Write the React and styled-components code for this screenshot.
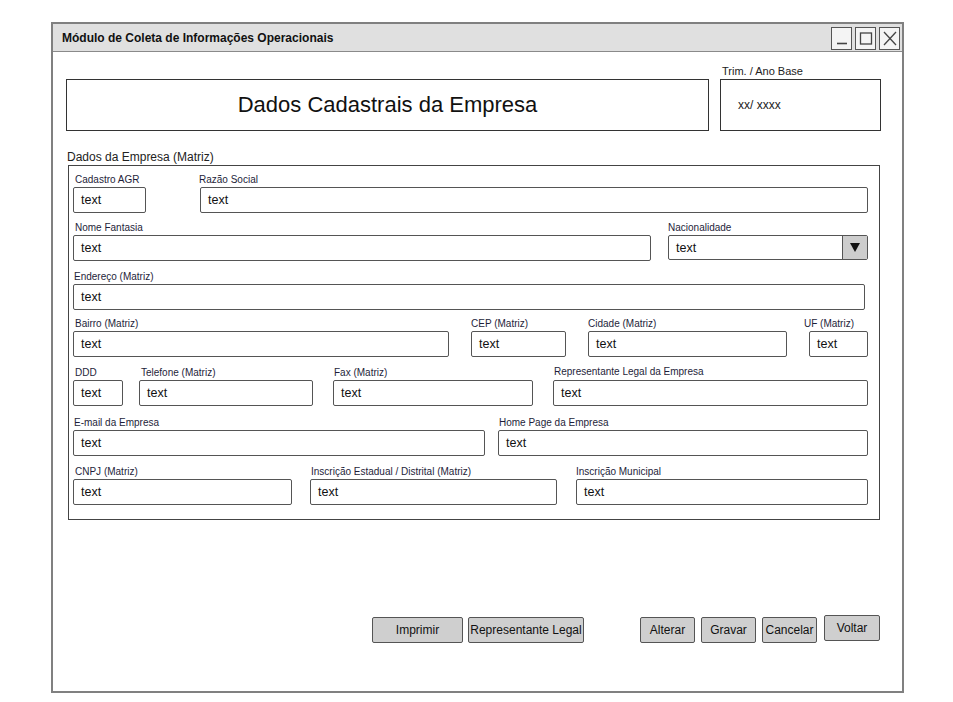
import React from "react";
import styled, { createGlobalStyle } from "styled-components";

const GlobalStyle = createGlobalStyle`
  html, body {
    margin: 0;
    padding: 0;
    background: #fff;
  }
  body {
    font-family: "Liberation Sans", Arial, sans-serif;
    color: #222;
  }
`;

const rows = [
  {
    mt: 7,
    fields: [
      { label: "Cadastro AGR", w: 73, ml: 4, lx: 2 },
      { label: "Razão Social", w: 668, ml: 54, lx: -1 },
    ],
  },
  {
    mt: 8,
    fields: [
      { label: "Nome Fantasia", w: 578, ml: 4, lx: 2 },
      { label: "Nacionalidade", w: 200, ml: 17, select: true },
    ],
  },
  {
    mt: 9,
    fields: [{ label: "Endereço (Matriz)", w: 792, ml: 4, lx: 1 }],
  },
  {
    mt: 7,
    fields: [
      { label: "Bairro (Matriz)", w: 376, ml: 4, lx: 2 },
      { label: "CEP (Matriz)", w: 95, ml: 22 },
      { label: "Cidade (Matriz)", w: 199, ml: 22 },
      { label: "UF (Matriz)", w: 59, ml: 22, lx: -5 },
    ],
  },
  {
    mt: 9,
    fields: [
      { label: "DDD", w: 50, ml: 4, lx: 2 },
      { label: "Telefone (Matriz)", w: 174, ml: 16, lx: 2 },
      { label: "Fax (Matriz)", w: 200, ml: 20, lx: 1 },
      { label: "Representante Legal da Empresa", w: 315, ml: 20, lx: 1, ly: -1 },
    ],
  },
  {
    mt: 10,
    fields: [
      { label: "E-mail da Empresa", w: 412, ml: 4, lx: 1 },
      { label: "Home Page da Empresa", w: 370, ml: 13, lx: 1 },
    ],
  },
  {
    mt: 9,
    fields: [
      { label: "CNPJ (Matriz)", w: 219, ml: 4, lx: 2 },
      { label: "Inscrição Estadual / Distrital (Matriz)", w: 247, ml: 18, lx: 1 },
      { label: "Inscrição Municipal", w: 292, ml: 19 },
    ],
  },
];

const leftButtons = [
  { label: "Imprimir", w: 91, ml: 319 },
  { label: "Representante Legal", w: 116, ml: 5 },
];

const rightButtons = [
  { label: "Alterar", w: 55, ml: 56 },
  { label: "Gravar", w: 55, ml: 6 },
  { label: "Cancelar", w: 55, ml: 6 },
  { label: "Voltar", w: 56, ml: 7, up: 2 },
];

const Window = styled.div`
  margin: 22px 0 0 51px;
  width: 853px;
  height: 671px;
  box-sizing: border-box;
  border: 2px solid #808080;
  display: flex;
  flex-direction: column;
`;

const TitleBar = styled.div`
  height: 27px;
  background: #e0e0e0;
  border-bottom: 1px solid #8a8a8a;
  display: flex;
  align-items: center;
  padding: 0 2px 0 9px;
`;

const Title = styled.div`
  flex: 1;
  font-size: 12px;
  font-weight: bold;
  color: #111;
  padding-top: 1px;
`;

const Controls = styled.div`
  display: flex;
  gap: 3px;
  padding-top: 2px;
`;

const ControlBox = styled.div`
  width: 21px;
  height: 23px;
  box-sizing: border-box;
  border: 1.5px solid #555;
  background: #f4f4f4;
  display: flex;
  align-items: center;
  justify-content: center;
`;

const Content = styled.div`
  padding: 12px 0 0 13px;
  display: flex;
  flex-direction: column;
`;

const HeaderRow = styled.div`
  display: flex;
  align-items: flex-end;
`;

const HeaderBox = styled.div`
  width: 643px;
  height: 52px;
  box-sizing: border-box;
  border: 1px solid #333;
  display: flex;
  align-items: center;
  justify-content: center;
  font-size: 22px;
  color: #111;
`;

const TrimColumn = styled.div`
  margin-left: 11px;
  display: flex;
  flex-direction: column;
`;

const TrimLabel = styled.div`
  font-size: 11px;
  line-height: 15px;
  padding-left: 2px;
  color: #222;
`;

const TrimBox = styled.div`
  width: 161px;
  height: 52px;
  box-sizing: border-box;
  border: 1px solid #333;
  display: flex;
  align-items: center;
  padding-left: 17px;
  font-size: 12px;
  color: #222;
`;

const GroupLabel = styled.div`
  margin-top: 18px;
  font-size: 12px;
  line-height: 16px;
  padding-left: 1px;
  color: #222;
`;

const Group = styled.div`
  margin-left: 2px;
  width: 812px;
  height: 355px;
  box-sizing: border-box;
  border: 1px solid #444;
`;

const Row = styled.div`
  display: flex;
  margin-top: ${(p) => p.$mt}px;
`;

const Field = styled.div`
  display: flex;
  flex-direction: column;
  width: ${(p) => p.$w}px;
  margin-left: ${(p) => p.$ml}px;
`;

const Label = styled.div`
  height: 14px;
  line-height: 14px;
  font-size: 10px;
  white-space: nowrap;
  color: #1e1e3a;
  padding-left: ${(p) => Math.max(p.$lx, 0)}px;
  margin-left: ${(p) => Math.min(p.$lx, 0)}px;
  position: relative;
  top: ${(p) => p.$ly}px;
`;

const Input = styled.div`
  height: 26px;
  box-sizing: border-box;
  border: 1.5px solid #555;
  border-radius: 2px;
  display: flex;
  align-items: center;
  padding-left: 7px;
  font-size: 12.5px;
  color: #111;
  background: #fff;
`;

const SelectBox = styled(Input)`
  padding-left: 0;
  height: 25px;
`;

const SelectText = styled.div`
  flex: 1;
  padding-left: 7px;
`;

const SelectArrow = styled.div`
  width: 24px;
  align-self: stretch;
  background: #cdcdcd;
  border-left: 1.5px solid #555;
  display: flex;
  align-items: center;
  justify-content: center;
`;

const ButtonBar = styled.div`
  display: flex;
  align-items: flex-start;
  margin-top: 97px;
  margin-left: -13px;
`;

const Button = styled.div`
  width: ${(p) => p.$w}px;
  margin-left: ${(p) => p.$ml}px;
  margin-top: ${(p) => (p.$up ? -p.$up : 0)}px;
  height: 26px;
  box-sizing: border-box;
  border: 1.5px solid #555;
  border-radius: 2px;
  background: #cfcfcf;
  display: flex;
  align-items: center;
  justify-content: center;
  font-size: 12px;
  color: #111;
  white-space: nowrap;
`;

const Glyph = ({ kind }) => (
  <svg width="14" height="15" viewBox="0 0 14 15" fill="none" stroke="#444" strokeWidth="1.3">
    {kind === "min" && <line x1="2" y1="12.5" x2="12" y2="12.5" strokeWidth="1.6" />}
    {kind === "max" && <rect x="1.5" y="2" width="11" height="11" />}
    {kind === "close" && (
      <>
        <line x1="1" y1="1" x2="13" y2="14" />
        <line x1="13" y1="1" x2="1" y2="14" />
      </>
    )}
  </svg>
);

const FormField = ({ f }) => (
  <Field $w={f.w} $ml={f.ml}>
    <Label $lx={f.lx || 0} $ly={f.ly || 0}>
      {f.label}
    </Label>
    {f.select ? (
      <SelectBox>
        <SelectText>text</SelectText>
        <SelectArrow>
          <svg width="10" height="9" viewBox="0 0 10 9">
            <path d="M0 0 L10 0 L5 9 Z" fill="#111" />
          </svg>
        </SelectArrow>
      </SelectBox>
    ) : (
      <Input>text</Input>
    )}
  </Field>
);

export default function App() {
  return (
    <>
      <GlobalStyle />
      <Window>
        <TitleBar>
          <Title>Módulo de Coleta de Informações Operacionais</Title>
          <Controls>
            <ControlBox>
              <Glyph kind="min" />
            </ControlBox>
            <ControlBox>
              <Glyph kind="max" />
            </ControlBox>
            <ControlBox>
              <Glyph kind="close" />
            </ControlBox>
          </Controls>
        </TitleBar>
        <Content>
          <HeaderRow>
            <HeaderBox>Dados Cadastrais da Empresa</HeaderBox>
            <TrimColumn>
              <TrimLabel>Trim. / Ano Base</TrimLabel>
              <TrimBox>xx/ xxxx</TrimBox>
            </TrimColumn>
          </HeaderRow>
          <GroupLabel>Dados da Empresa (Matriz)</GroupLabel>
          <Group>
            {rows.map((r, i) => (
              <Row key={i} $mt={r.mt}>
                {r.fields.map((f) => (
                  <FormField key={f.label} f={f} />
                ))}
              </Row>
            ))}
          </Group>
          <ButtonBar>
            {leftButtons.map((b) => (
              <Button key={b.label} $w={b.w} $ml={b.ml}>
                {b.label}
              </Button>
            ))}
            {rightButtons.map((b) => (
              <Button key={b.label} $w={b.w} $ml={b.ml} $up={b.up}>
                {b.label}
              </Button>
            ))}
          </ButtonBar>
        </Content>
      </Window>
    </>
  );
}
